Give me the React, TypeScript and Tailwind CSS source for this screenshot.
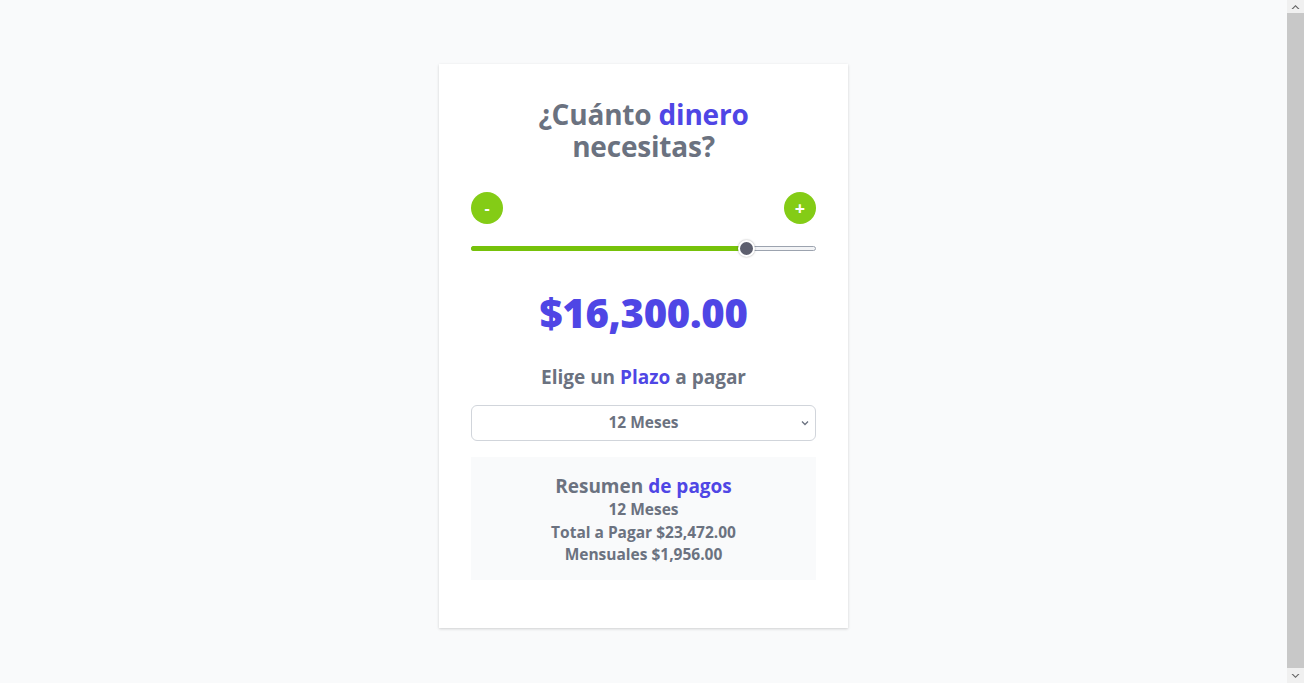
import { useState } from "react";

const MIN = 0;
const MAX = 20000;
const RATE = 0.44;

const fmt = (n: number) =>
  "$" + n.toLocaleString("en-US", { minimumFractionDigits: 2, maximumFractionDigits: 2 });

function Scrollbar() {
  return (
    <div className="sticky top-0 flex h-screen w-[17px] shrink-0 flex-col bg-[#f0f0f0]">
      <div className="flex h-[13px] items-center justify-center">
        <svg width="9" height="6" viewBox="0 0 9 6" fill="#606060">
          <path d="M0.5 5L4.5 1l4 4H7L4.5 2.5 2 5z" />
        </svg>
      </div>
      <div className="flex-1 bg-[#c8c8c8]" />
      <div className="flex h-[15px] items-center justify-center">
        <svg width="9" height="6" viewBox="0 0 9 6" fill="#606060">
          <path d="M0.5 1L4.5 5l4-4H7L4.5 3.5 2 1z" />
        </svg>
      </div>
    </div>
  );
}

export default function App() {
  const [amount, setAmount] = useState(16300);
  const [months, setMonths] = useState(12);

  const total = amount * (1 + RATE);
  const monthly = total / months;
  const pct = (amount - MIN) / (MAX - MIN);

  return (
    <div className="flex bg-[#f9fafb] font-['Open_Sans','Noto_Sans',sans-serif]">
      <div className="flex-1 py-16">
        <div className="mx-auto w-[409px] bg-white px-8 pt-[34px] pb-12 shadow-[0_1px_3px_rgba(0,0,0,0.12),0_1px_2px_rgba(0,0,0,0.06)]">
          {/* title */}
          <h1 className="text-center text-[28px] font-bold leading-8 tracking-[-0.2px] text-[#6b7280]">
            ¿Cuánto <span className="text-[#4f46e5]">dinero</span>
            <br />
            necesitas?
          </h1>

          {/* +/- controls */}
          <div className="mt-[30px] flex items-center justify-between">
            <button
              onClick={() => setAmount((a) => Math.max(MIN, a - 100))}
              className="flex h-8 w-8 items-center justify-center rounded-full bg-[#84cc16] text-base font-bold leading-none text-white"
            >
              -
            </button>
            <button
              onClick={() => setAmount((a) => Math.min(MAX, a + 100))}
              className="flex h-8 w-8 items-center justify-center rounded-full bg-[#84cc16] text-lg font-bold leading-none text-white"
            >
              +
            </button>
          </div>

          {/* slider */}
          <div className="relative mt-4 h-[17px]">
            <div className="absolute top-[6px] right-0 left-0 h-[5px] rounded-full border border-[#9ca3af] bg-[#f3f4f6]" />
            <div
              className="absolute top-[6px] left-0 h-[5px] rounded-full bg-[#76c20a]"
              style={{ width: `calc(8px + ${pct} * (100% - 16px))` }}
            />
            <div
              className="absolute top-0 h-[17px] w-[17px] rounded-full border-2 border-white bg-[#5d5f6e] shadow-[0_0_2px_rgba(0,0,0,0.35)]"
              style={{ left: `calc(${pct} * (100% - 17px))` }}
            />
          </div>

          {/* amount */}
          <p className="mt-9 text-center text-[40px] font-extrabold leading-10 tracking-[-0.3px] text-[#4f46e5]">
            {fmt(amount)}
          </p>

          <h2 className="mt-[30px] text-center text-[19px] font-bold leading-7 text-[#6b7280]">
            Elige un <span className="text-[#4f46e5]">Plazo</span> a pagar
          </h2>

          <div className="relative mt-[14px]">
            <select
              value={months}
              onChange={(e) => setMonths(Number(e.target.value))}
              className="h-9 w-full appearance-none rounded-md border border-[#d1d5db] bg-white text-center text-[15.5px] font-bold text-[#6b7280]"
            >
              <option value={3}>3 Meses</option>
              <option value={6}>6 Meses</option>
              <option value={9}>9 Meses</option>
              <option value={12}>12 Meses</option>
            </select>
            <svg
              className="pointer-events-none absolute top-1/2 right-[7px] -translate-y-1/2 text-[#6b7280]"
              width="8"
              height="6"
              viewBox="0 0 8 6"
              fill="none"
              stroke="currentColor"
              strokeWidth="1.3"
            >
              <path d="M1 1.5l3 3 3-3" />
            </svg>
          </div>

          {/* summary */}
          <div className="mt-4 bg-[#f9fafb] px-4 pt-[17px] pb-[14px] text-center font-bold text-[#6b7280]">
            <h3 className="text-[19px] leading-6 font-bold">
              Resumen <span className="text-[#4f46e5]">de pagos</span>
            </h3>
            <p className="text-[15.5px] leading-[22.5px]">{months} Meses</p>
            <p className="text-[15.5px] leading-[22.5px]">Total a Pagar {fmt(total)}</p>
            <p className="text-[15.5px] leading-[22.5px]">Mensuales {fmt(monthly)}</p>
          </div>
        </div>
      </div>
      <Scrollbar />
    </div>
  );
}
